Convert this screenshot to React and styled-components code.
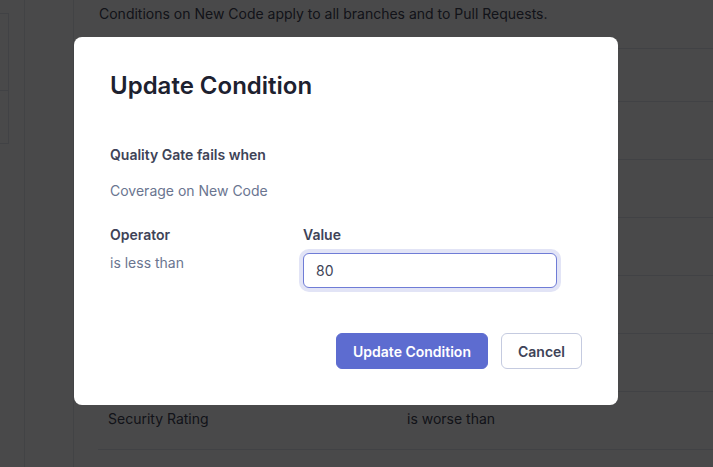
import React from 'react';
import styled, { createGlobalStyle } from 'styled-components';

const GlobalStyle = createGlobalStyle`
  html, body {
    margin: 0;
    padding: 0;
    background: #fcfcfd;
    font-family: Inter, "Noto Sans", "Liberation Sans", sans-serif;
    -webkit-font-smoothing: antialiased;
  }
  * {
    box-sizing: border-box;
  }
`;

const Page = styled.div`
  display: flex;
  height: 467px;
  overflow: hidden;
  color: rgb(62, 67, 87);
  font-size: 14px;
`;

const Sidebar = styled.aside`
  width: 25px;
  flex: none;
  border-right: 1px solid #e4e6ee;
  padding-top: 13px;
`;

const SideCard = styled.div`
  width: 9px;
  height: 131px;
  border: 1px solid #dfe2ec;
  border-left: none;
  display: flex;
  flex-direction: column;
`;

const SideCardPart = styled.div`
  height: ${(p) => p.$h}px;
  border-bottom: ${(p) => (p.$divider ? '1px solid #dfe2ec' : 'none')};
`;

const NavColumn = styled.nav`
  width: 49px;
  flex: none;
  border-right: 1px solid #e4e6ee;
`;

const Main = styled.main`
  flex: 1;
  padding-left: 24px;
`;

const Description = styled.p`
  margin: 4px 0 24px 1px;
  line-height: 20px;
  white-space: nowrap;
`;

const Table = styled.div`
  display: flex;
  flex-direction: column;
`;

const Row = styled.div`
  display: grid;
  grid-template-columns: 299px 1fr;
  align-items: center;
  height: ${(p) => (p.$header ? 53 : 58)}px;
  border-top: 1px solid #e1e4ee;
  padding: 0 0 4px 10px;
  line-height: 20px;
  white-space: nowrap;
`;

const Overlay = styled.div`
  position: fixed;
  inset: 0;
  background: rgba(0, 0, 0, 0.71);
  display: flex;
  align-items: flex-start;
  padding: 37px 0 0 74px;
`;

const Modal = styled.div`
  width: 544px;
  background: #ffffff;
  border-radius: 8px;
  padding: 36px;
  display: flex;
  flex-direction: column;
`;

const Title = styled.h2`
  margin: 0;
  font-size: 24px;
  line-height: 26px;
  font-weight: 600;
  color: rgb(29, 33, 47);
`;

const Field = styled.div`
  display: flex;
  flex-direction: column;
  gap: ${(p) => p.$gap || 8}px;
`;

const Label = styled.div`
  font-size: 14px;
  line-height: 20px;
  font-weight: 600;
  color: rgb(62, 67, 87);
`;

const Muted = styled.div`
  font-size: 14px;
  line-height: 20px;
  color: rgb(106, 117, 144);
`;

const Section = styled.div`
  margin-top: ${(p) => p.$top}px;
`;

const Columns = styled.div`
  display: grid;
  grid-template-columns: 193px 254px;
  margin-top: 24px;
`;

const Input = styled.input`
  height: 35px;
  width: 254px;
  border: 1px solid #6f7cd6;
  border-radius: 6px;
  box-shadow: 0 0 0 4px #e2e4f6;
  padding: 0 12px;
  font-family: inherit;
  font-size: 14px;
  color: rgb(62, 67, 87);
  outline: none;
`;

const Footer = styled.div`
  display: flex;
  justify-content: flex-end;
  gap: 13px;
  margin-top: 45px;
`;

const Button = styled.button`
  height: 36px;
  padding: 0 16px;
  border-radius: 6px;
  font-family: inherit;
  font-size: 14px;
  font-weight: 600;
  cursor: pointer;
  border: 1px solid ${(p) => (p.$primary ? '#5d6cd0' : '#c5cbe0')};
  background: ${(p) => (p.$primary ? '#5d6cd0' : '#ffffff')};
  color: ${(p) => (p.$primary ? '#ffffff' : 'rgb(62, 67, 87)')};
`;

// only the last filled row peeks out below the dialog
const rows = [
  ['', ''],
  ['', ''],
  ['', ''],
  ['', ''],
  ['', ''],
  ['', ''],
  ['Security Rating', 'is worse than'],
  ['', ''],
];

export default function App() {
  return (
    <>
      <GlobalStyle />
      <Page>
        <Sidebar>
          <SideCard>
            <SideCardPart $h={77} $divider />
            <SideCardPart $h={52} />
          </SideCard>
        </Sidebar>
        <NavColumn />
        <Main>
          <Description>
            Conditions on New Code apply to all branches and to Pull Requests.
          </Description>
          <Table>
            {rows.map(([metric, op], i) => (
              <Row key={i} $header={i === 0}>
                <span>{metric}</span>
                <span>{op}</span>
              </Row>
            ))}
          </Table>
        </Main>
      </Page>

      <Overlay>
        <Modal role="dialog">
          <Title>Update Condition</Title>
          <Section $top={46}>
            <Field $gap={16}>
              <Label>Quality Gate fails when</Label>
              <Muted>Coverage on New Code</Muted>
            </Field>
          </Section>
          <Columns>
            <Field>
              <Label>Operator</Label>
              <Muted>is less than</Muted>
            </Field>
            <Field>
              <Label>Value</Label>
              <Input defaultValue="80" />
            </Field>
          </Columns>
          <Footer>
            <Button $primary>Update Condition</Button>
            <Button>Cancel</Button>
          </Footer>
        </Modal>
      </Overlay>
    </>
  );
}
